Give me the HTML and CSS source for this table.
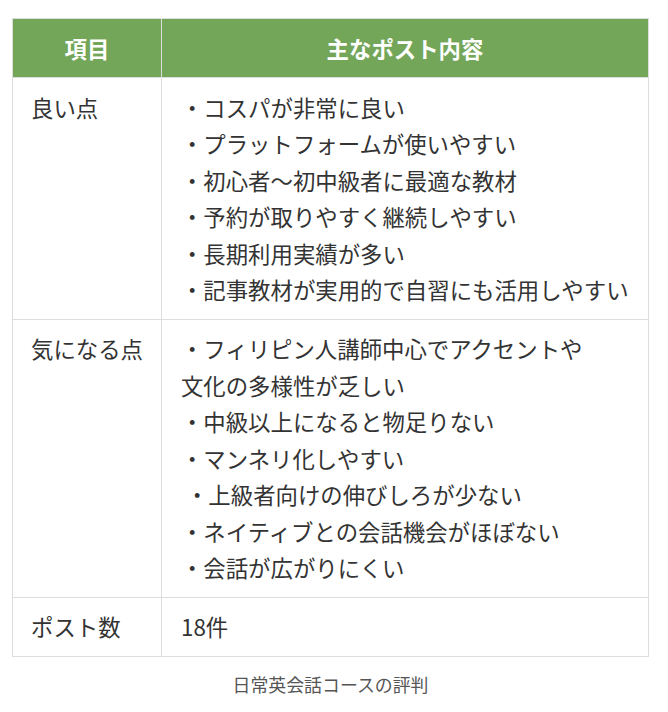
FILE: index.html
```html
<!DOCTYPE html>
<html lang="ja">
<head>
<meta charset="utf-8">
<title>日常英会話コースの評判</title>
<link rel="stylesheet" href="styles.css">
</head>
<body>
<figure class="review">
  <table class="review-table">
    <thead>
      <tr>
        <th class="col-label">項目</th>
        <th class="col-content">主なポスト内容</th>
      </tr>
    </thead>
    <tbody>
      <tr>
        <td class="label">良い点</td>
        <td class="content">・コスパが非常に良い<br>・プラットフォームが使いやすい<br>・初心者〜初中級者に最適な教材<br>・予約が取りやすく継続しやすい<br>・長期利用実績が多い<br>・記事教材が実用的で自習にも活用しやすい</td>
      </tr>
      <tr>
        <td class="label">気になる点</td>
        <td class="content">・フィリピン人講師中心でアクセントや<br>文化の多様性が乏しい<br>・中級以上になると物足りない<br>・マンネリ化しやすい<br>&nbsp;・上級者向けの伸びしろが少ない<br>・ネイティブとの会話機会がほぼない<br>・会話が広がりにくい</td>
      </tr>
      <tr>
        <td class="label">ポスト数</td>
        <td class="content">18件</td>
      </tr>
    </tbody>
  </table>
  <figcaption class="caption">日常英会話コースの評判</figcaption>
</figure>
</body>
</html>
```

FILE: styles.css
```css
html, body {
  margin: 0;
  padding: 0;
  background: #ffffff;
}

body {
  font-family: "Noto Sans CJK JP", "Noto Sans", sans-serif;
  color: #333333;
}

.review {
  margin: 0;
  padding: 18px 0 0 12px;
}

.review-table {
  width: 637px;
  border-collapse: collapse;
  font-size: 22.4px;
  line-height: 36.5px;
}

.review-table th,
.review-table td {
  border: 1px solid #dddddd;
  padding: 10.5px 18px 11px;
  vertical-align: top;
  text-align: left;
}

.review-table th {
  background: #74a65a;
  color: #ffffff;
  font-weight: 700;
  text-align: center;
}

.col-label {
  width: 110px;
}

.review-table td.label {
  white-space: nowrap;
}

.review-table td.content {
  padding-left: 19px;
}

.caption {
  width: 637px;
  margin-top: 13px;
  text-align: center;
  font-size: 17.9px;
  line-height: 28px;
  color: #555555;
}
```
